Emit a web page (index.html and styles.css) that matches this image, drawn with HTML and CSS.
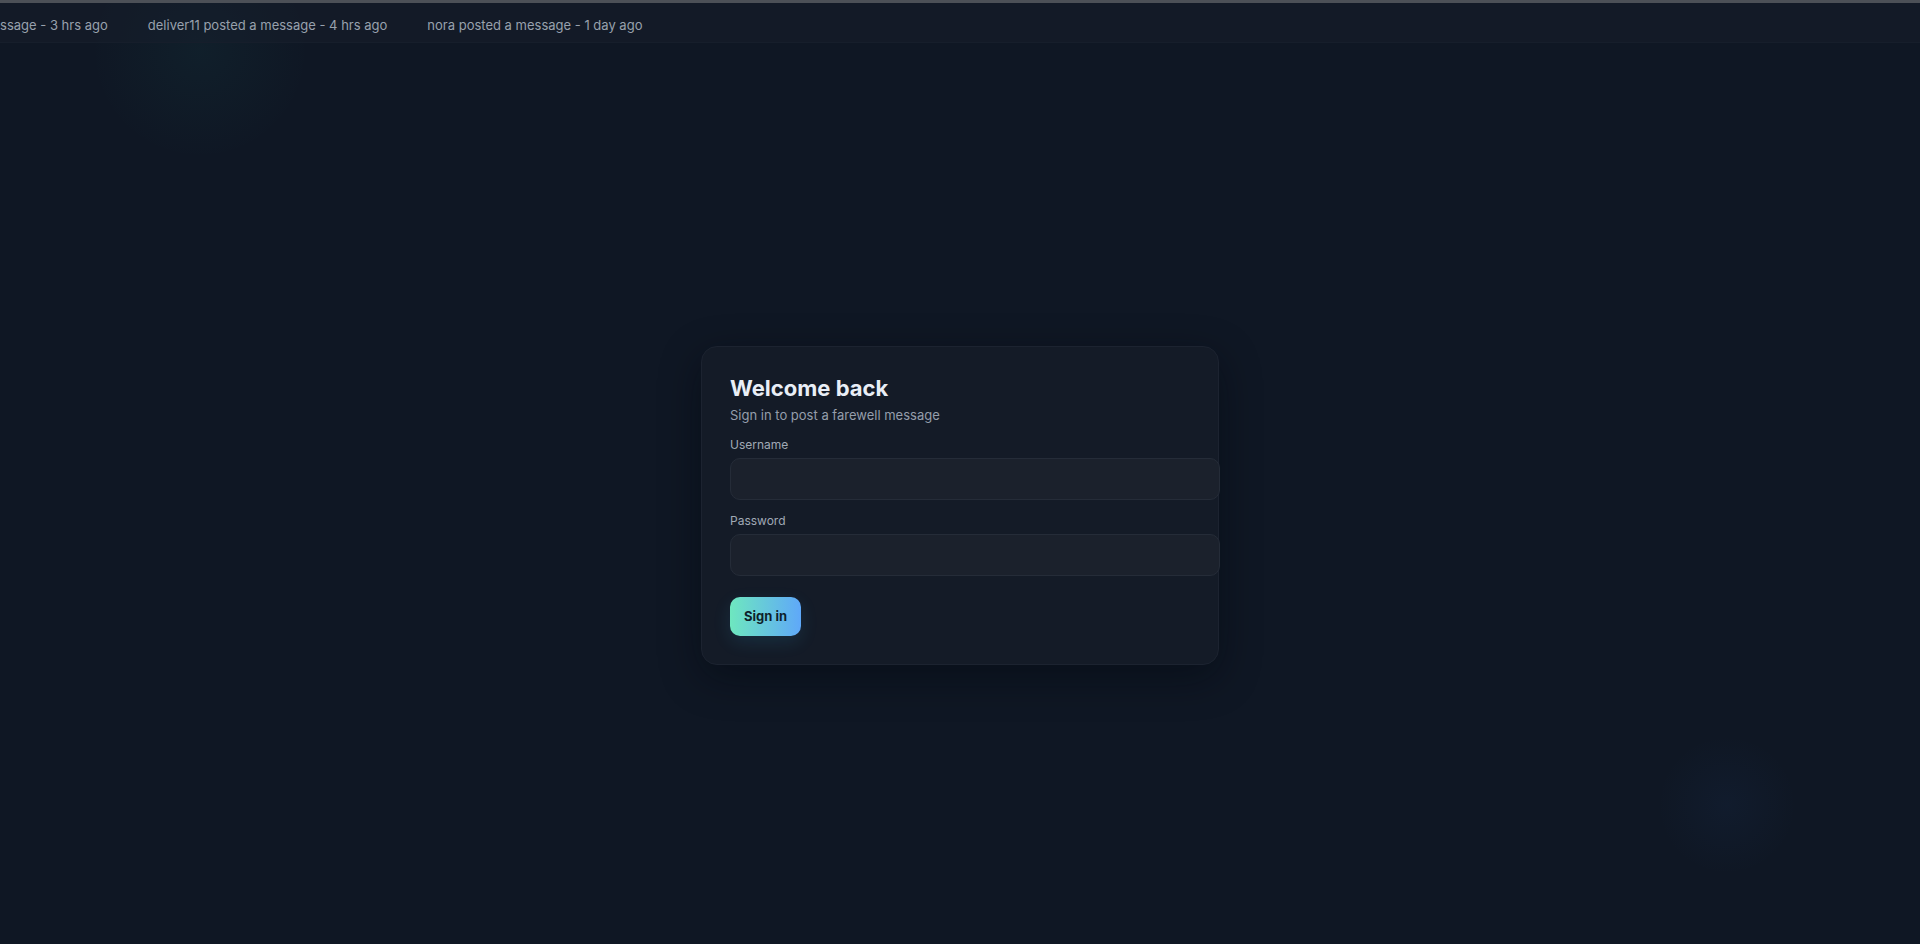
FILE: index.html
```html
<!DOCTYPE html>
<html lang="en">

<head>
    <meta charset="utf-8">
    <title>Sign in</title>
    <link rel="stylesheet" href="styles.css">
</head>

<body>
    <div class="ticker">
        <div class="ticker-track">
            <span class="ticker-item">sam posted a message - 3 hrs ago</span>
            <span class="ticker-item">deliver11 posted a message - 4 hrs ago</span>
            <span class="ticker-item">nora posted a message - 1 day ago</span>
        </div>
    </div>

    <main class="page">
        <form class="card" id="login">
            <h1 class="card-title">Welcome back</h1>
            <p class="card-sub">Sign in to post a farewell message</p>

            <div class="field">
                <label for="username">Username</label>
                <input id="username" type="text" autocomplete="username">
            </div>
            <div class="field">
                <label for="password">Password</label>
                <input id="password" type="password" autocomplete="current-password">
            </div>

            <button class="btn" type="submit">Sign in</button>
        </form>
    </main>
</body>

</html>
```

FILE: styles.css
```css
* {
    box-sizing: border-box;
}

html,
body {
    margin: 0;
    height: 100%;
}

body {
    font-family: Inter, "Noto Sans", sans-serif;
    color: #e6ebf2;
    background:
        radial-gradient(circle at 200px 50px, rgba(45, 212, 191, 0.045), transparent 110px),
        radial-gradient(circle at 1727px 805px, rgba(59, 130, 246, 0.045), transparent 70px),
        #0f1724;
    overflow: hidden;
}

.ticker {
    height: 43px;
    border-top: 3px solid #4c5057;
    border-bottom: 1px solid #161e2b;
    background-color: rgba(24, 32, 44, 0.45);
    overflow: hidden;
    white-space: nowrap;
    display: flex;
    align-items: center;
}

.ticker-track {
    display: flex;
    gap: 40px;
    margin-left: -105px;
    padding-top: 4px;
}

.ticker-item {
    font-size: 13px;
    color: #98a1ad;
}

.page {
    min-height: calc(100vh - 43px);
    padding-top: 24px;
    display: flex;
    align-items: center;
    justify-content: center;
}

.card {
    width: 518px;
    padding: 28px;
    border: 1px solid #1c2330;
    border-radius: 16px;
    background-color: #141b27;
    box-shadow: 0 12px 40px rgba(3, 6, 14, 0.45);
}

.card-title {
    margin: 0 0 6px;
    font-size: 22px;
    font-weight: 700;
    line-height: 26.6px;
    color: #e9eef6;
}

.card-sub {
    margin: 0 0 14px;
    font-size: 13px;
    line-height: 16px;
    color: #959eab;
}

.field {
    display: flex;
    flex-direction: column;
    margin-bottom: 13px;
}

.field label {
    font-size: 12px;
    line-height: 15px;
    margin-bottom: 6px;
    color: #a0a9b5;
}

.field input {
    box-sizing: content-box;
    width: 100%;
    padding: 12px 14px;
    font-family: inherit;
    font-size: 14px;
    line-height: 16px;
    color: #e6ebf2;
    background-color: #1b212c;
    border: 1px solid #252c38;
    border-radius: 10px;
    outline: none;
}

.btn {
    margin-top: 8px;
    padding: 12px 14px;
    font-family: inherit;
    font-size: 13px;
    font-weight: 700;
    line-height: 15px;
    color: #0e1f2a;
    background: linear-gradient(90deg, #6ee7bf, #5fa8f9);
    border: 0;
    border-radius: 10px;
    box-shadow: 0 6px 18px rgba(56, 189, 248, 0.12);
    cursor: pointer;
}
```
